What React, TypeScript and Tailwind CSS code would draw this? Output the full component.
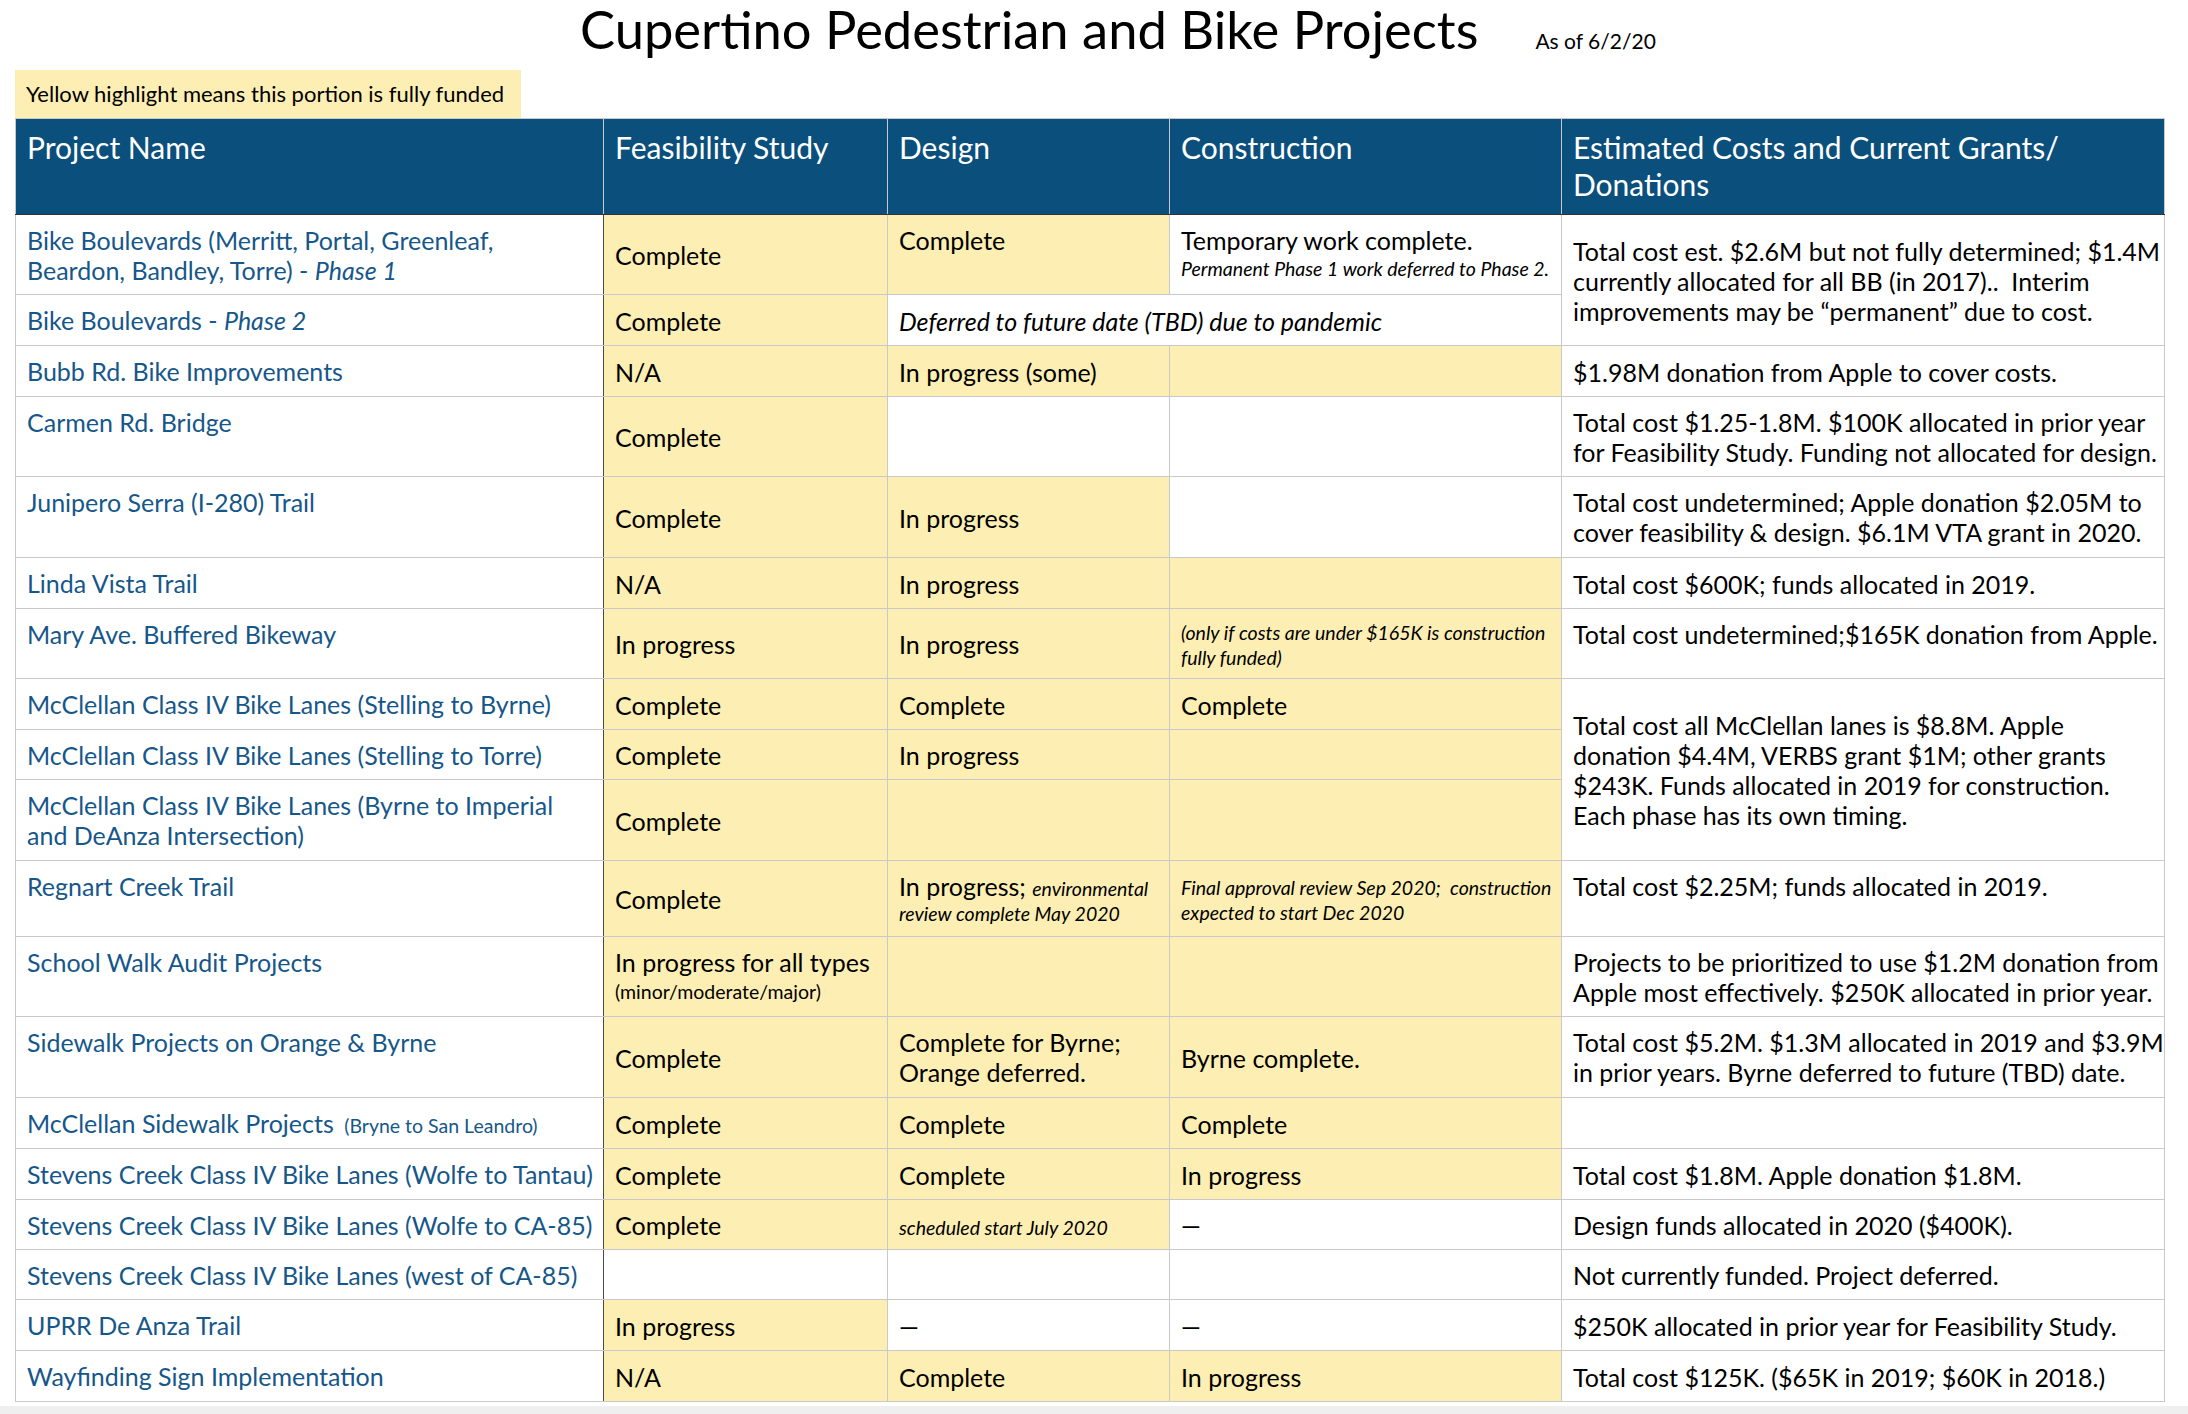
import React from "react";

type CellProps = {
  y?: boolean;
  top?: boolean;
  tight?: boolean;
  rowSpan?: number;
  colSpan?: number;
  className?: string;
  children?: React.ReactNode;
};

function Cell({ y, top, tight, rowSpan, colSpan, className = "", children }: CellProps) {
  return (
    <td
      rowSpan={rowSpan}
      colSpan={colSpan}
      className={`overflow-visible whitespace-nowrap border border-[#c9c9c9] px-[11px] text-[25px] leading-[30px] text-black ${
        tight ? "pt-[10px] pb-[2px]" : "pt-[10px] pb-[9px]"
      } ${top ? "align-top" : "align-middle"} ${y ? "bg-[#fdefb3]" : "bg-white"} ${className}`}
    >
      {children}
    </td>
  );
}

function Name({ children }: { children: React.ReactNode }) {
  return (
    <td className="whitespace-nowrap border border-[#c9c9c9] border-r-[#4a4a4a] bg-white px-[11px] pt-[10px] pb-[9px] align-top text-[25px] leading-[30px] text-[#16578a]">
      {children}
    </td>
  );
}

function Small({ children }: { children: React.ReactNode }) {
  return <span className="text-[19.5px] leading-[20px] italic">{children}</span>;
}

function Head({ children }: { children: React.ReactNode }) {
  return (
    <th className="whitespace-nowrap border border-[#c9c9c9] border-b-[#333] px-[11px] pt-[10px] pb-[10px] text-left align-top text-[30px] font-normal leading-[37px]">
      {children}
    </th>
  );
}

export default function App() {
  return (
    <div className="flex min-h-[1414px] flex-col bg-white font-[Lato,sans-serif]">
      {/* Title */}
      <div className="flex h-[70px] items-baseline pl-[580px] pt-[3px]">
        <h1 className="text-[52.5px] leading-[52px] text-black">
          Cupertino Pedestrian and Bike Projects
        </h1>
        <span className="ml-[57px] text-[21px] text-black">As of 6/2/20</span>
      </div>

      {/* Legend */}
      <div className="ml-[15px] h-[48px] w-[506px] bg-[#fdefb3] pl-[11px] text-[22px] leading-[48px] text-black">
        Yellow highlight means this portion is fully funded
      </div>

      <table className="ml-[15px] w-[2149px] table-fixed border-collapse">
        <colgroup>
          <col className="w-[588px]" />
          <col className="w-[284px]" />
          <col className="w-[282px]" />
          <col className="w-[392px]" />
          <col className="w-[603px]" />
        </colgroup>
        <thead>
          <tr className="h-[96px] bg-[#0b4f7c] text-white">
            <Head>Project Name</Head>
            <Head>Feasibility Study</Head>
            <Head>Design</Head>
            <Head>Construction</Head>
            <Head>
              Estimated Costs and Current Grants/
              <br />
              Donations
            </Head>
          </tr>
        </thead>
        <tbody>
          <tr className="h-[80px]">
            <Name>
              Bike Boulevards (Merritt, Portal, Greenleaf,
              <br />
              Beardon, Bandley, Torre) - <i>Phase 1</i>
            </Name>
            <Cell y>Complete</Cell>
            <Cell y top>Complete</Cell>
            <Cell top tight>
              Temporary work complete.
              <div className="mt-[2px] text-[19.5px] leading-[24px] italic">
                Permanent Phase 1 work deferred to Phase 2.
              </div>
            </Cell>
            <Cell rowSpan={2}>
              Total cost est. $2.6M but not fully determined; $1.4M
              <br />
              currently allocated for all BB (in 2017)..&nbsp; Interim
              <br />
              improvements may be “permanent” due to cost.
            </Cell>
          </tr>
          <tr className="h-[51px]">
            <Name>
              Bike Boulevards - <i>Phase 2</i>
            </Name>
            <Cell y>Complete</Cell>
            <Cell colSpan={2} className="italic">
              Deferred to future date (TBD) due to pandemic
            </Cell>
          </tr>
          <tr className="h-[51px]">
            <Name>Bubb Rd. Bike Improvements</Name>
            <Cell y>N/A</Cell>
            <Cell y>In progress (some)</Cell>
            <Cell y />
            <Cell>$1.98M donation from Apple to cover costs.</Cell>
          </tr>
          <tr className="h-[80px]">
            <Name>Carmen Rd. Bridge</Name>
            <Cell y>Complete</Cell>
            <Cell />
            <Cell />
            <Cell top>
              Total cost $1.25-1.8M. $100K allocated in prior year
              <br />
              for Feasibility Study. Funding not allocated for design.
            </Cell>
          </tr>
          <tr className="h-[81px]">
            <Name>Junipero Serra (I-280) Trail</Name>
            <Cell y>Complete</Cell>
            <Cell y>In progress</Cell>
            <Cell />
            <Cell top>
              Total cost undetermined; Apple donation $2.05M to
              <br />
              cover feasibility &amp; design. $6.1M VTA grant in 2020.
            </Cell>
          </tr>
          <tr className="h-[51px]">
            <Name>Linda Vista Trail</Name>
            <Cell y>N/A</Cell>
            <Cell y>In progress</Cell>
            <Cell y />
            <Cell>Total cost $600K; funds allocated in 2019.</Cell>
          </tr>
          <tr className="h-[70px]">
            <Name>Mary Ave. Buffered Bikeway</Name>
            <Cell y>In progress</Cell>
            <Cell y>In progress</Cell>
            <Cell y top tight>
              <div className="pt-[1px] text-[19.5px] leading-[25px] italic">
                (only if costs are under $165K is construction
                <br />
                fully funded)
              </div>
            </Cell>
            <Cell top>Total cost undetermined;$165K donation from Apple.</Cell>
          </tr>
          <tr className="h-[51px]">
            <Name>McClellan Class IV Bike Lanes (Stelling to Byrne)</Name>
            <Cell y>Complete</Cell>
            <Cell y>Complete</Cell>
            <Cell y>Complete</Cell>
            <Cell rowSpan={3}>
              Total cost all McClellan lanes is $8.8M. Apple
              <br />
              donation $4.4M, VERBS grant $1M; other grants
              <br />
              $243K. Funds allocated in 2019 for construction.
              <br />
              Each phase has its own timing.
            </Cell>
          </tr>
          <tr className="h-[50px]">
            <Name>McClellan Class IV Bike Lanes (Stelling to Torre)</Name>
            <Cell y>Complete</Cell>
            <Cell y>In progress</Cell>
            <Cell y />
          </tr>
          <tr className="h-[81px]">
            <Name>
              McClellan Class IV Bike Lanes (Byrne to Imperial
              <br />
              and DeAnza Intersection)
            </Name>
            <Cell y>Complete</Cell>
            <Cell y />
            <Cell y />
          </tr>
          <tr className="h-[76px]">
            <Name>Regnart Creek Trail</Name>
            <Cell y>Complete</Cell>
            <Cell y top tight>
              In progress; <Small>environmental</Small>
              <div className="text-[19.5px] leading-[25px] italic">review complete May 2020</div>
            </Cell>
            <Cell y top tight>
              <div className="pt-[4px] text-[19.5px] leading-[25px] italic">
                Final approval review Sep 2020;&nbsp; construction
                <br />
                expected to start Dec 2020
              </div>
            </Cell>
            <Cell top>Total cost $2.25M; funds allocated in 2019.</Cell>
          </tr>
          <tr className="h-[80px]">
            <Name>School Walk Audit Projects</Name>
            <Cell y top tight>
              In progress for all types
              <div className="mt-[2px] text-[19.5px] leading-[25px]">(minor/moderate/major)</div>
            </Cell>
            <Cell y />
            <Cell y />
            <Cell top>
              Projects to be prioritized to use $1.2M donation from
              <br />
              Apple most effectively. $250K allocated in prior year.
            </Cell>
          </tr>
          <tr className="h-[81px]">
            <Name>Sidewalk Projects on Orange &amp; Byrne</Name>
            <Cell y>Complete</Cell>
            <Cell y top>
              Complete for Byrne;
              <br />
              Orange deferred.
            </Cell>
            <Cell y>Byrne complete.</Cell>
            <Cell top>
              Total cost $5.2M. $1.3M allocated in 2019 and $3.9M
              <br />
              in prior years. Byrne deferred to future (TBD) date.
            </Cell>
          </tr>
          <tr className="h-[51px]">
            <Name>
              McClellan Sidewalk Projects{" "}
              <span className="ml-[4px] text-[19.5px] leading-[20px]">(Bryne to San Leandro)</span>
            </Name>
            <Cell y>Complete</Cell>
            <Cell y>Complete</Cell>
            <Cell y>Complete</Cell>
            <Cell />
          </tr>
          <tr className="h-[51px]">
            <Name>Stevens Creek Class IV Bike Lanes (Wolfe to Tantau)</Name>
            <Cell y>Complete</Cell>
            <Cell y>Complete</Cell>
            <Cell y>In progress</Cell>
            <Cell>Total cost $1.8M. Apple donation $1.8M.</Cell>
          </tr>
          <tr className="h-[50px]">
            <Name>Stevens Creek Class IV Bike Lanes (Wolfe to CA-85)</Name>
            <Cell y>Complete</Cell>
            <Cell y>
              <Small>scheduled start July 2020</Small>
            </Cell>
            <Cell>—</Cell>
            <Cell>Design funds allocated in 2020 ($400K).</Cell>
          </tr>
          <tr className="h-[50px]">
            <Name>Stevens Creek Class IV Bike Lanes (west of CA-85)</Name>
            <Cell />
            <Cell />
            <Cell />
            <Cell>Not currently funded. Project deferred.</Cell>
          </tr>
          <tr className="h-[51px]">
            <Name>UPRR De Anza Trail</Name>
            <Cell y>In progress</Cell>
            <Cell>—</Cell>
            <Cell>—</Cell>
            <Cell>$250K allocated in prior year for Feasibility Study.</Cell>
          </tr>
          <tr className="h-[51px]">
            <Name>Wayfinding Sign Implementation</Name>
            <Cell y>N/A</Cell>
            <Cell y>Complete</Cell>
            <Cell y>In progress</Cell>
            <Cell>Total cost $125K. ($65K in 2019; $60K in 2018.)</Cell>
          </tr>
        </tbody>
      </table>

      <div className="mt-auto h-[8px] bg-[#efefef]" />
    </div>
  );
}
